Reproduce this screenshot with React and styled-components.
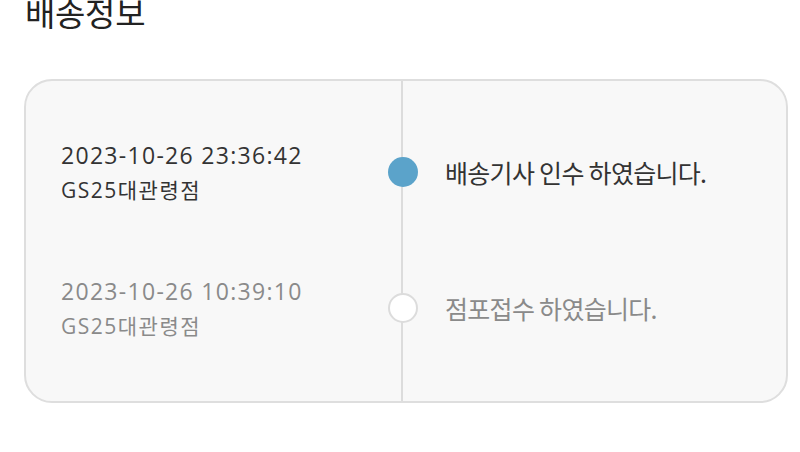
import React from "react";
import styled, { createGlobalStyle } from "styled-components";

const GlobalStyle = createGlobalStyle`
  html, body {
    margin: 0;
    padding: 0;
    background: #ffffff;
    font-family: "Open Sans", "Noto Sans CJK KR", sans-serif;
  }
`;

const Page = styled.div`
  width: 800px;
  height: 452px;
  overflow: hidden;
  padding: 0 12px 0 24px;
  box-sizing: border-box;
`;

const Title = styled.h2`
  margin: -12px 0 43px 1px;
  font-family: "Noto Sans CJK KR", sans-serif;
  font-size: 33px;
  font-weight: 400;
  line-height: 48px;
  letter-spacing: -0.3px;
  color: #222;
`;

const Card = styled.div`
  box-sizing: border-box;
  width: 764px;
  height: 324px;
  border: 2px solid #dedede;
  border-radius: 28px;
  background: linear-gradient(#dcdcdc, #dcdcdc) no-repeat 375px 0 / 2px 100%,
    #f8f8f8;
  padding: 23px 0 25px;
  display: grid;
  grid-template-rows: repeat(2, 136px);
`;

const Row = styled.div`
  display: grid;
  grid-template-columns: 376px 0 1fr;
  align-items: center;
  color: ${(p) => (p.$done ? "#333" : "#8a8a8a")};
`;

const Info = styled.div`
  padding-left: 35px;
  display: flex;
  flex-direction: column;
  gap: 3px;
`;

const Stamp = styled.span`
  font-size: 23px;
  line-height: 32px;
  letter-spacing: 1.3px;
  font-weight: ${(p) => (p.$done ? 500 : 400)};
`;

const Store = styled.span`
  font-size: 21px;
  line-height: 32px;
  letter-spacing: 1.5px;
`;

const Dot = styled.span`
  width: 30px;
  height: 30px;
  margin-left: -14px;
  border-radius: 50%;
  box-sizing: border-box;
  background: ${(p) => (p.$done ? "#5ba3ca" : "#ffffff")};
  border: ${(p) => (p.$done ? "none" : "2px solid #dcdcdc")};
`;

const Message = styled.span`
  padding-left: 43px;
  font-family: "Noto Sans CJK KR", sans-serif;
  font-size: 25px;
  letter-spacing: -0.7px;
`;

const events = [
  {
    time: "2023-10-26 23:36:42",
    store: "GS25대관령점",
    message: "배송기사 인수 하였습니다.",
    done: true,
  },
  {
    time: "2023-10-26 10:39:10",
    store: "GS25대관령점",
    message: "점포접수 하였습니다.",
    done: false,
  },
];

export default function App() {
  return (
    <Page>
      <GlobalStyle />
      <Title>배송정보</Title>
      <Card>
        {events.map((e) => (
          <Row key={e.time} $done={e.done}>
            <Info>
              <Stamp $done={e.done}>{e.time}</Stamp>
              <Store>{e.store}</Store>
            </Info>
            <Dot $done={e.done} />
            <Message>{e.message}</Message>
          </Row>
        ))}
      </Card>
    </Page>
  );
}
